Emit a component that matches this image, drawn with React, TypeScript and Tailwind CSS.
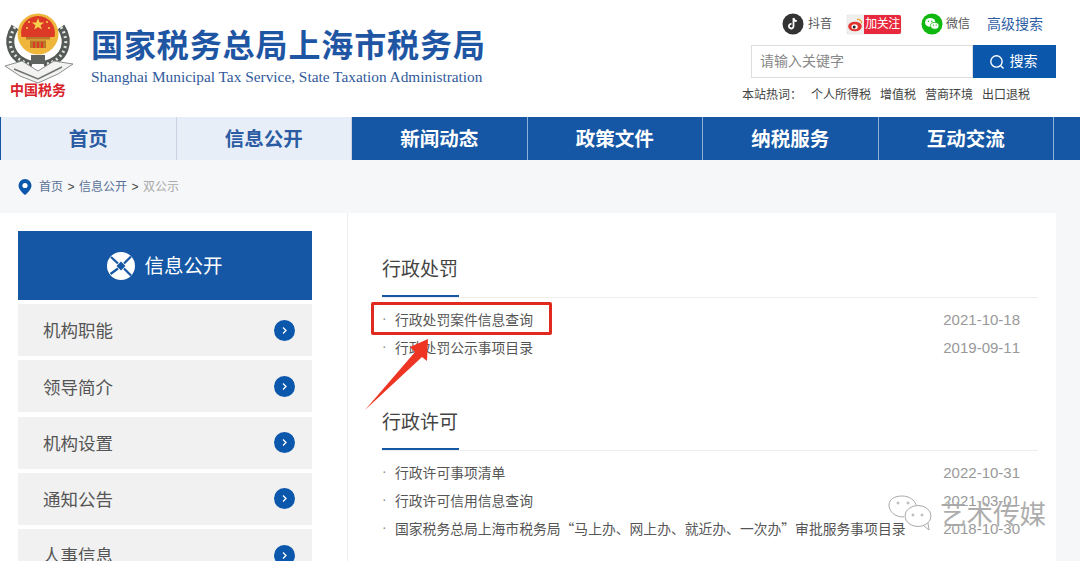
const cjk = "font-['Liberation_Sans','Noto_Sans_CJK_SC',sans-serif]"

const navItems = ['首页', '信息公开', '新闻动态', '政策文件', '纳税服务', '互动交流']
const sideItems = ['机构职能', '领导简介', '机构设置', '通知公告', '人事信息']

function Emblem() {
  return (
    <svg width="76" height="80" viewBox="0 0 76 80" className="block">
      {/* wreath */}
      <path d="M15 22 C6 36 9 54 32 60" fill="none" stroke="#555a56" strokeWidth="8" />
      <path d="M61 22 C70 36 67 54 44 60" fill="none" stroke="#555a56" strokeWidth="8" />
      <path d="M15 22 C6 36 9 54 32 60" fill="none" stroke="#dfe2de" strokeWidth="3" strokeDasharray="2 3" />
      <path d="M61 22 C70 36 67 54 44 60" fill="none" stroke="#dfe2de" strokeWidth="3" strokeDasharray="2 3" />
      {/* ribbon */}
      <path d="M5 61 L22 56 L38 66 L54 56 L73 59 L58 69 L38 78 L20 71Z" fill="#f2f3f0" stroke="#8b8f8c" strokeWidth="1" />
      <path d="M14 64 L38 74 L62 62" fill="none" stroke="#6f7470" strokeWidth="1.5" />
      {/* badge */}
      <circle cx="38" cy="29" r="20.5" fill="#efb63c" />
      <path d="M38 11 a17 17 0 0 1 16.5 21 L21.5 32 a17 17 0 0 1 16.5 -21z" fill="#dc3a26" />
      <path d="M38 13l1.6 4.4h4.6l-3.7 2.8 1.4 4.4-3.9-2.7-3.9 2.7 1.4-4.4-3.7-2.8h4.6z" fill="#f7d24e" />
      <circle cx="29" cy="17" r="1" fill="#f7d24e" />
      <circle cx="47" cy="17" r="1" fill="#f7d24e" />
      <circle cx="27" cy="23" r="1" fill="#f7d24e" />
      <circle cx="49" cy="23" r="1" fill="#f7d24e" />
      <path d="M26 32h24v2.5H26zM30 35.5h16V43H30z" fill="#b9772a" />
      <path d="M33 37h2v6h-2zM37 37h2v6h-2zM41 37h2v6h-2z" fill="#dc3a26" />
      <path d="M31 50h14v9H31z" fill="#5f6460" />
    </svg>
  )
}

function TiktokIcon() {
  return (
    <svg width="22" height="22" viewBox="0 0 22 22">
      <circle cx="11" cy="11" r="10.5" fill="#333" />
      <path d="M11.5 5v8.2a2.3 2.3 0 1 1-2-2.3M11.5 5c.3 1.8 1.5 2.9 3.3 3.1" fill="none" stroke="#fff" strokeWidth="1.8" />
    </svg>
  )
}

function WechatIcon() {
  return (
    <svg width="22" height="22" viewBox="0 0 22 22">
      <circle cx="11" cy="11" r="10.5" fill="#0fb80f" />
      <ellipse cx="9.2" cy="9.4" rx="5.2" ry="4.3" fill="#fff" />
      <ellipse cx="13.8" cy="12.8" rx="4.2" ry="3.4" fill="#fff" stroke="#0fb80f" strokeWidth=".8" />
      <circle cx="7.4" cy="8.2" r=".7" fill="#0fb80f" />
      <circle cx="10.8" cy="8.2" r=".7" fill="#0fb80f" />
      <circle cx="12.4" cy="12.2" r=".6" fill="#0fb80f" />
      <circle cx="15.2" cy="12.2" r=".6" fill="#0fb80f" />
    </svg>
  )
}

function WeiboBadge() {
  return (
    <div className="flex h-[19px] w-[54px] items-center rounded-[2px] bg-[#eee] shadow-[0_0_1px_#999]">
      <svg width="17" height="17" viewBox="0 0 17 17">
        <ellipse cx="8" cy="10.5" rx="6.8" ry="4.8" fill="#e2342f" />
        <ellipse cx="7.6" cy="10.8" rx="3.2" ry="2.5" fill="#fff" />
        <circle cx="7.2" cy="10.9" r="1.5" fill="#222" />
        <path d="M10 3.5c3-.5 5 1.6 4.5 4" fill="none" stroke="#f0a030" strokeWidth="1.3" />
      </svg>
      <span className="flex h-full flex-1 items-center justify-center rounded-r-[2px] bg-[#e8283c] text-[12px] tracking-[-0.5px] text-white">加关注</span>
    </div>
  )
}

function Header() {
  return (
    <header className="flex h-[117px] bg-white">
      <div className="w-[91px] shrink-0 pt-[5px]">
        <Emblem />
        <div className="-mt-[3px] pl-[10px] text-[14px] font-bold leading-[16px] whitespace-nowrap text-[#d8232a]">中国税务</div>
      </div>
      <div className="w-[639px] shrink-0 pt-[26px]">
        <div className="text-[32px] font-bold leading-[40px] tracking-[0.9px] text-[#1f56a3]">国家税务总局上海市税务局</div>
        <div className="mt-[1px] whitespace-nowrap font-['Liberation_Serif',serif] text-[15.35px] leading-[20px] text-[#2f5a9c]">
          Shanghai Municipal Tax Service, State Taxation Administration
        </div>
      </div>
      <div className="flex-1 pt-[13px]">
        <div className="flex h-[22px] items-center text-[12px] text-[#555]">
          <div className="ml-[52px] flex items-center gap-[4px]">
            <TiktokIcon />
            <span>抖音</span>
          </div>
          <div className="ml-[15px]">
            <WeiboBadge />
          </div>
          <div className="ml-[20px] flex items-center gap-[3px]">
            <WechatIcon />
            <span>微信</span>
          </div>
          <span className="ml-[17px] text-[14px] text-[#2f5fa5]">高级搜索</span>
        </div>
        <div className="ml-[21px] mt-[10px] flex h-[33px] w-[305px]">
          <div className="flex flex-1 items-center border border-[#ddd] pl-[8px] text-[14px] text-[#888]">请输入关键字</div>
          <div className="flex w-[83px] items-center justify-center gap-[5px] bg-[#0b57ab] pr-[3px] text-[14px] text-white">
            <svg width="16" height="16" viewBox="0 0 15 15" fill="none" stroke="#fff" strokeWidth="1.3">
              <circle cx="7" cy="7" r="5.3" />
              <path d="M11 11l2.6 2.6" />
            </svg>
            搜索
          </div>
        </div>
        <div className="ml-[12px] mt-[9px] flex text-[12px] leading-[16px] text-[#444]">
          <span className="w-[69px]">本站热词：</span>
          <span className="w-[69px]">个人所得税</span>
          <span className="w-[45px]">增值税</span>
          <span className="w-[57px]">营商环境</span>
          <span>出口退税</span>
        </div>
      </div>
    </header>
  )
}

function Nav() {
  return (
    <nav className="flex h-[43px] bg-[#1557a5] pl-[1px]">
      {navItems.map((item, index) => (
        <div
          key={item}
          className={
            index < 2
              ? 'flex w-[175.5px] items-center justify-center border-r border-[#c9d3e2] bg-[#e8eef7] pt-[2px] text-[19.5px] font-bold text-[#2a5ba3]'
              : 'flex w-[175.5px] items-center justify-center border-r border-[#8fb0d8] pt-[2px] text-[19.5px] font-bold text-white'
          }
        >
          {item}
        </div>
      ))}
    </nav>
  )
}

function SideMenu() {
  return (
    <aside className="w-[348px] shrink-0 border-r border-[#eee] pl-[18px] pr-[35px] pt-[18px]">
      <div className="flex h-[69px] items-center justify-center gap-[9px] bg-[#1557a5] text-[19.5px] text-white">
        <svg width="28" height="28" viewBox="0 0 28 28">
          <circle cx="14" cy="14" r="14" fill="#fff" />
          <path d="M4 5 L11 11.5 M24 4.5 L17 11.5 M3.5 22 L11 16.5 M24 23.5 L17 16.5" fill="none" stroke="#1557a5" strokeWidth="2.2" />
          <path d="M14 9.5 L18.5 14 L14 18.5 L9.5 14Z" fill="#1557a5" />
        </svg>
        <span className="pt-[2px]">信息公开</span>
      </div>
      <div className="mt-[4px] flex flex-col gap-[4.25px]">
        {sideItems.map((item) => (
          <div key={item} className="flex h-[52px] items-center justify-between bg-[#f1f1f1] pl-[25px] pr-[17px] text-[17.5px] text-[#555]">
            <span className="pt-[3px]">{item}</span>
            <span className="flex size-[21px] items-center justify-center rounded-full bg-[#0b57ab]">
              <svg width="9" height="9" viewBox="0 0 9 9" fill="none" stroke="#fff" strokeWidth="1.3">
                <path d="M3 1.5l3 3-3 3" />
              </svg>
            </span>
          </div>
        ))}
      </div>
    </aside>
  )
}

type Row = { title: string; date: string }

function Section({ title, rows, className }: { title: string; rows: Row[]; className?: string }) {
  return (
    <section className={className}>
      <div className="border-b border-[#eee]">
        <div className="h-[41px] w-[77px] border-b-2 border-[#1557a5] text-[19px] leading-[28px] whitespace-nowrap text-[#444]">{title}</div>
      </div>
      <ul className="pt-[8px]">
        {rows.map((row) => (
          <li key={row.title} className="flex h-[28px] items-center justify-between text-[13.8px] text-[#555]">
            <span className="-mt-[2px] flex items-center font-['Noto_Sans_CJK_SC','Liberation_Sans',sans-serif]">
              <span className="w-[13px] font-['Liberation_Sans',sans-serif] text-[#888]">·</span>
              {row.title}
            </span>
            <span className="pr-[18px] text-[15px] text-[#999] [font-kerning:none]">{row.date}</span>
          </li>
        ))}
      </ul>
    </section>
  )
}

function Content() {
  return (
    <main className="flex-1 pl-[34px] pr-[18px] pt-[43px]">
      <Section
        title="行政处罚"
        rows={[
          { title: '行政处罚案件信息查询', date: '2021-10-18' },
          { title: '行政处罚公示事项目录', date: '2019-09-11' },
        ]}
      />
      <Section
        className="mt-[47px]"
        title="行政许可"
        rows={[
          { title: '行政许可事项清单', date: '2022-10-31' },
          { title: '行政许可信用信息查询', date: '2021-03-01' },
          { title: '国家税务总局上海市税务局“马上办、网上办、就近办、一次办”审批服务事项目录', date: '2018-10-30' },
        ]}
      />
    </main>
  )
}

export default function App() {
  return (
    <div className={`relative h-[561px] w-[1080px] overflow-hidden bg-[#f6f7f8] ${cjk}`}>
      <Header />
      <Nav />
      <div className="flex h-[53px] items-center gap-[7px] pl-[18px] text-[12px] text-[#5a7299]">
        <svg width="14" height="16" viewBox="0 0 14 16">
          <path d="M7 0a6.5 6.5 0 0 1 6.5 6.5C13.5 11 7 16 7 16S.5 11 .5 6.5A6.5 6.5 0 0 1 7 0z" fill="#0b57ab" />
          <circle cx="7" cy="6.5" r="2.6" fill="#fff" />
        </svg>
        <div className="flex gap-[4.5px]">
          <span>首页</span>
          <span className="text-[#444]">&gt;</span>
          <span>信息公开</span>
          <span className="text-[#444]">&gt;</span>
          <span className="text-[#aaa]">双公示</span>
        </div>
      </div>
      <div className="flex h-[348px] w-[1056px] bg-white">
        <SideMenu />
        <Content />
      </div>

      {/* red annotation over the first row */}
      <div className="absolute left-[371px] top-[302px] h-[33px] w-[181px] rounded-[2px] border-[3px] border-[#e02a20]" />
      <svg className="absolute left-[360px] top-[330px]" width="80" height="85" viewBox="0 0 80 85">
        <path d="M68 9 L50 17 L55 22 L5 80 L62 27 L67 31 Z" fill="#ee3524" />
      </svg>

      {/* watermark */}
      <div className="absolute left-[888px] top-[495px] flex items-center gap-[6px]">
        <svg width="46" height="40" viewBox="0 0 46 40" fill="none" stroke="#aaa" strokeWidth="1">
          <path d="M16 22C6 22 1 16 1 10 1 4 7 1 14 1s13 4 14 9" />
          <ellipse cx="30" cy="21" rx="13" ry="10.5" fill="#ffffffcc" />
          <path d="M36 31l5 4-1-7" />
          <circle cx="10" cy="8" r="1" />
          <circle cx="20" cy="8" r="1" />
          <circle cx="25" cy="20" r="1" />
          <circle cx="34" cy="20" r="1" />
        </svg>
        <span className="text-[26.5px] leading-none text-[#888]/70 [text-shadow:0_0_2px_#fff]">艺术传媒</span>
      </div>
    </div>
  )
}
